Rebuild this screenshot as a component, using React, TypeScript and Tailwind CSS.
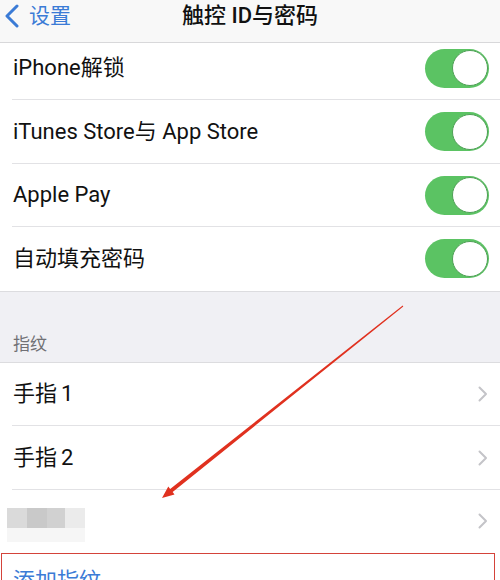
import React from "react";

const font = { fontFamily: 'Roboto, "Noto Sans CJK SC", sans-serif' };

function Toggle() {
  return (
    <div className="w-[64px] h-[39px] rounded-full bg-[#5bc363] p-[1.5px] flex justify-end shrink-0">
      <div className="w-[36px] h-[36px] rounded-full bg-white border border-[#4e9f55]" />
    </div>
  );
}

function Chevron() {
  return (
    <svg width="10" height="16" viewBox="0 0 10 16" className="shrink-0">
      <path d="M1.5 1.5 L8 8 L1.5 14.5" fill="none" stroke="#c4c4c8" strokeWidth="2" strokeLinecap="round" strokeLinejoin="round" />
    </svg>
  );
}

function ToggleRow({ label, first, last }: { label: string; first?: boolean; last?: boolean }) {
  return (
    <div className={`relative flex items-center justify-between pl-[13px] pr-[11px] ${first ? "h-[57px] pb-[7px]" : "h-[63.5px]"}`}>
      <span className="text-[22px] text-[#111] leading-none">{label}</span>
      <Toggle />
      {!last && <div className="absolute bottom-0 left-[12px] right-0 h-px bg-[#e2e2e5]" />}
    </div>
  );
}

function NavRow({ children, last }: { children: React.ReactNode; last?: boolean }) {
  return (
    <div className="relative flex items-center justify-between pl-[13px] pr-[12px] h-[63.5px]">
      <div className="flex items-center">{children}</div>
      <Chevron />
      {!last && <div className="absolute bottom-0 left-[12px] right-0 h-px bg-[#e2e2e5]" />}
    </div>
  );
}

export default function App() {
  return (
    <div className="relative w-[500px] h-[580px] overflow-hidden bg-white" style={font}>
      {/* nav bar */}
      <div className="relative h-[43px] bg-[#f8f8f8] border-b border-[#d8d8da] flex items-start">
        <div className="flex items-center pt-[3px] pl-[4px] text-[#3b7bd6]">
          <svg width="16" height="24" viewBox="0 0 16 24">
            <path d="M13 2 L3 12 L13 22" fill="none" stroke="#3b7bd6" strokeWidth="3" strokeLinecap="round" strokeLinejoin="round" />
          </svg>
          <span className="ml-[9px] text-[21px] leading-[26px]">设置</span>
        </div>
        <div className="absolute left-0 right-0 top-[3px] text-center text-[22px] leading-[26px] font-medium text-[#111]">
          触控 ID与密码
        </div>
      </div>

      {/* toggles */}
      <div className="border-b border-[#dcdcdf]">
        <ToggleRow label="iPhone解锁" first />
        <ToggleRow label="iTunes Store与 App Store" />
        <ToggleRow label="Apple Pay" />
        <ToggleRow label="自动填充密码" last />
      </div>

      {/* section header */}
      <div className="h-[71px] bg-[#f0f0f4] border-b border-[#dcdcdf] flex items-end pl-[13px] pb-[9px]">
        <span className="text-[17px] text-[#707075] leading-none">指纹</span>
      </div>

      {/* fingers */}
      <NavRow>
        <span className="text-[22px] text-[#111] leading-none">
          手指<span className="ml-[4px]">1</span>
        </span>
      </NavRow>
      <NavRow>
        <span className="text-[22px] text-[#111] leading-none">
          手指<span className="ml-[4px]">2</span>
        </span>
      </NavRow>
      <NavRow last>
        <div className="flex flex-col -ml-[6px] mt-[8px]">
          <div className="flex h-[20px]">
            <div className="w-[20px] bg-[#dadada]" />
            <div className="w-[20px] bg-[#c9c9c9]" />
            <div className="w-[18px] bg-[#d1d1d1]" />
            <div className="w-[20px] bg-[#ebebeb]" />
          </div>
          <div className="h-[14px] w-[78px] bg-[#f6f6f6]" />
        </div>
      </NavRow>

      {/* add fingerprint (highlighted) */}
      <div className="ml-[1px] mr-[5px] h-[70px] border-[1.5px] border-[#d4433a] flex items-start pl-[11px] pt-[16px]">
        <span className="text-[22px] text-[#3b7bd6] leading-none">添加指纹</span>
      </div>

      {/* annotation arrow */}
      <svg className="absolute inset-0 pointer-events-none" width="500" height="580" viewBox="0 0 500 580">
        <polygon
          points="403.3,306.4 172.65,492.06 174.5,494.4 162,498 168.3,486.6 170.15,488.94 402.7,305.6"
          fill="#e0311f"
        />
      </svg>
    </div>
  );
}
